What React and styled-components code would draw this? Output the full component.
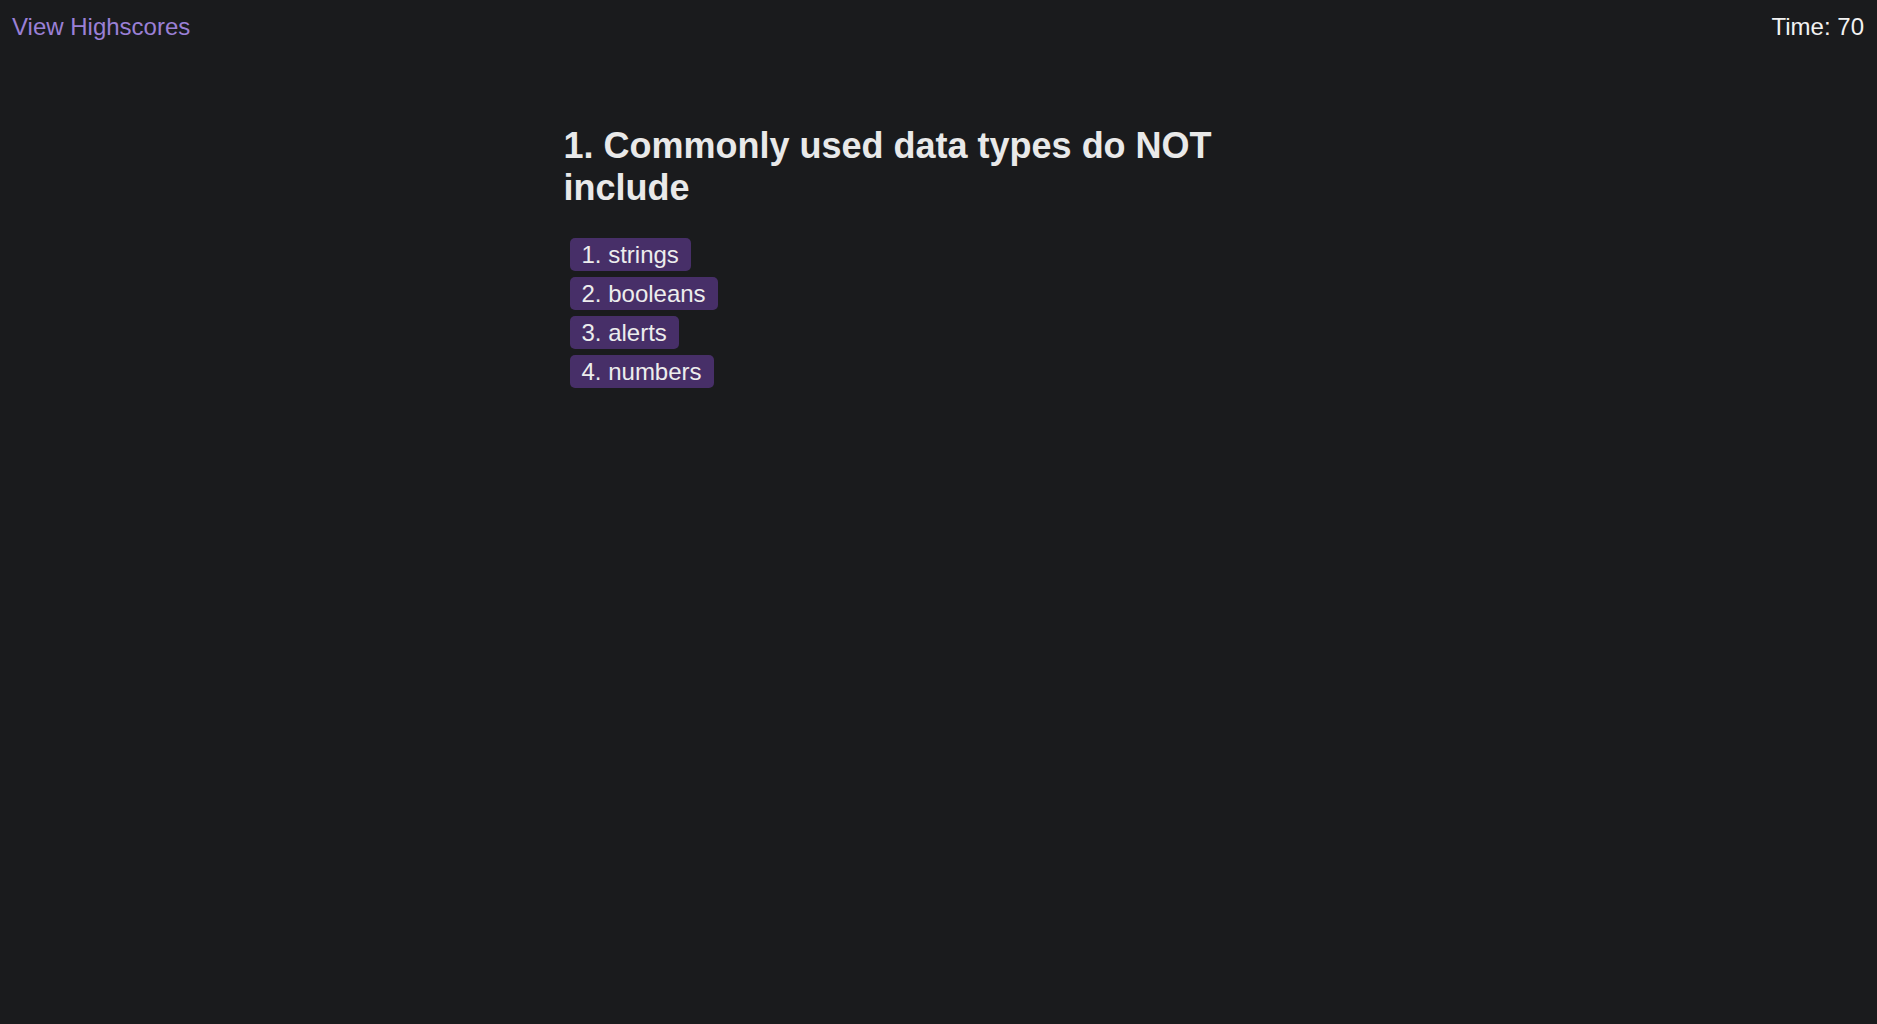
import React from 'react';
import styled, { createGlobalStyle } from 'styled-components';

const GlobalStyle = createGlobalStyle`
  html, body {
    margin: 0;
    padding: 0;
    background: #1a1b1d;
    min-height: 100%;
  }
  body {
    font-family: "Liberation Sans", Arial, sans-serif;
    color: #ececec;
  }
`;

const Page = styled.div`
  min-height: 1024px;
  background: #1a1b1d;
`;

const Header = styled.header`
  display: flex;
  justify-content: space-between;
  align-items: center;
  padding: 13px 13px 0 12px;
  font-size: 24px;
  line-height: 27px;
`;

const HighscoresLink = styled.a`
  color: #9a80d6;
  text-decoration: none;
  cursor: pointer;
`;

const Timer = styled.div`
  color: #f2f2f2;
`;

const Quiz = styled.main`
  width: 750px;
  margin: 85px auto 0;
`;

const Question = styled.h2`
  margin: 0 0 29px;
  font-size: 36px;
  font-weight: 700;
  line-height: 42px;
  color: #e9e9e9;
`;

const Choices = styled.div`
  display: flex;
  flex-direction: column;
  align-items: flex-start;
  gap: 6px;
  padding-left: 6px;
`;

const Choice = styled.button`
  font-family: "Liberation Sans", Arial, sans-serif;
  font-size: 24px;
  line-height: 27px;
  padding: 3px 12px;
  border: none;
  border-radius: 5px;
  background: #472f68;
  color: #ededed;
  cursor: pointer;
  &:hover { background: #563a7d; }
`;

const choices = ['strings', 'booleans', 'alerts', 'numbers'];

export default function App() {
  return (
    <Page>
      <GlobalStyle />
      <Header>
        <HighscoresLink>View Highscores</HighscoresLink>
        <Timer>Time: 70</Timer>
      </Header>
      <Quiz>
        <Question>1. Commonly used data types do NOT include</Question>
        <Choices>
          {choices.map((c, i) => (
            <Choice key={c}>{`${i + 1}. ${c}`}</Choice>
          ))}
        </Choices>
      </Quiz>
    </Page>
  );
}
